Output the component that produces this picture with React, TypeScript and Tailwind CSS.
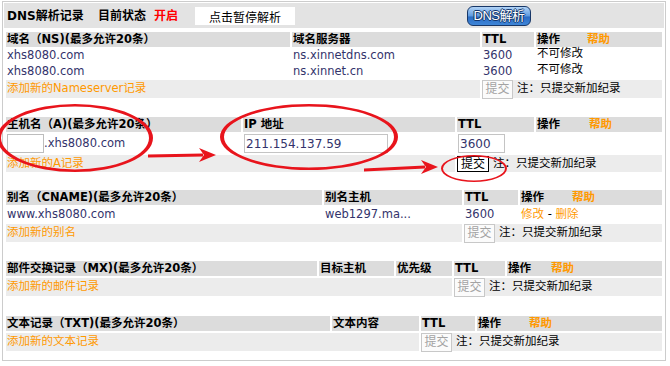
import React from "react";

const font = "font-['DejaVu_Sans','Noto_Sans_CJK_SC',sans-serif]";

const Head = ({ className = "", children }: { className?: string; children?: React.ReactNode }) => (
  <div className={`h-[15px] shrink-0 bg-[#dcdcdc] pl-[1px] font-bold leading-[15px] whitespace-nowrap text-black ${className}`}>
    {children}
  </div>
);

const Cell = ({ className = "", children }: { className?: string; children?: React.ReactNode }) => (
  <div className={`h-[15px] shrink-0 pl-[1px] leading-[15px] whitespace-nowrap text-[#33336b] ${className}`}>
    {children}
  </div>
);

const Help = ({ gap = "ml-[27px]" }: { gap?: string }) => (
  <span className={`${gap} text-[#ff9900]`}>帮助</span>
);

const Submit = ({ active = false }: { active?: boolean }) => (
  <button
    disabled={!active}
    className={
      active
        ? "flex h-[16px] w-[32px] items-center justify-center border border-black bg-white text-[12px] text-black"
        : "flex h-[19px] w-[31px] items-center justify-center border border-[#c8c8c8] bg-[#fbfbfb] text-[12px] text-[#a3a3a3]"
    }
  >
    提交
  </button>
);

const AddRow = ({ left, link, tall = true, active = false }: { left: string; link: string; tall?: boolean; active?: boolean }) => (
  <div className={`flex gap-x-[2px] ${tall ? "h-[18px]" : "h-[17px]"}`}>
    <div className={`${left} flex shrink-0 items-center bg-[#ececec] pl-[1px] text-[#ff9900]`}>{link}</div>
    <div className="flex flex-1 items-center gap-[4px] whitespace-nowrap bg-[#ececec] text-black">
      <Submit active={active} />
      <span>注：只提交新加纪录</span>
    </div>
  </div>
);

function Arrow({ x1, y1, x2, y2 }: { x1: number; y1: number; x2: number; y2: number }) {
  const tip = x2;
  const base = x2 - 17;
  return (
    <g fill="#e8141c" stroke="none">
      <path d={`M${x1} ${y1 - 1.5} L${base + 4} ${y2 - 1.5} L${base + 4} ${y2 + 1.5} L${x1} ${y1 + 1.5} Z`} />
      <path d={`M${tip} ${y2} L${base} ${y2 - 7} L${base + 5} ${y2} L${base} ${y2 + 7} Z`} />
    </g>
  );
}

function Ring({ cx, cy, rx, ry, side, top }: { cx: number; cy: number; rx: number; ry: number; side: number; top: number }) {
  const irx = rx - side;
  const iry = ry - top;
  return (
    <path
      fillRule="evenodd"
      fill="#e8141c"
      d={`M${cx - rx} ${cy} a${rx} ${ry} 0 1 0 ${rx * 2} 0 a${rx} ${ry} 0 1 0 ${-rx * 2} 0 Z M${cx - irx} ${cy} a${irx} ${iry} 0 1 0 ${irx * 2} 0 a${irx} ${iry} 0 1 0 ${-irx * 2} 0 Z`}
    />
  );
}

export default function App() {
  return (
    <div className={`relative h-[366px] w-[670px] overflow-hidden bg-white pl-[2px] pt-[1px] text-[11.5px] ${font}`}>
      <div className="h-[360px] w-[664px] border border-[#cccccc] px-[1px] pt-[1px]">
        {/* top bar */}
        <div className="flex h-[25px] items-center bg-[#e3e3e3] pl-[3px] text-[12px] font-bold text-black">
          <span className="w-[91px] shrink-0">DNS解析记录</span>
          <span className="w-[56px] shrink-0">目前状态</span>
          <span className="w-[41px] shrink-0 text-[#ff0000]">开启</span>
          <div className="flex h-[18px] w-[100px] shrink-0 items-start justify-center bg-white pt-[2px] font-normal">点击暂停解析</div>
          <div className="ml-[172px] flex h-[20px] w-[64px] items-center justify-center rounded-[6px] border border-[#173768] bg-[linear-gradient(#b3d4f7,#5d9ae0_50%,#2b6cc4_55%,#3f86d8)] font-['Liberation_Sans','Noto_Sans_CJK_SC',sans-serif] text-[13px] font-normal tracking-[-0.5px] text-white [text-shadow:-1px_0_#13356a,1px_0_#13356a,0_-1px_#13356a,0_1px_#13356a]">
            DNS解析
          </div>
        </div>

        <div className="mt-[4px] flex flex-col pl-[2px]">
          {/* NS */}
          <div className="flex w-[656px] flex-col gap-y-[1px]">
            <div className="flex gap-x-[2px]">
              <Head className="w-[284px]">域名（NS)(最多允许20条）</Head>
              <Head className="w-[188px]">域名服务器</Head>
              <Head className="w-[52px]">TTL</Head>
              <Head className="flex-1">操作<Help /></Head>
            </div>
            {["ns.xinnetdns.com", "ns.xinnet.cn"].map((ns) => (
              <div key={ns} className="flex gap-x-[2px]">
                <Cell className="w-[284px]">xhs8080.com</Cell>
                <Cell className="w-[188px]">{ns}</Cell>
                <Cell className="w-[52px]">3600</Cell>
                <Cell className="flex-1 text-black">
                  <span className="relative top-[-2px] text-black">不可修改</span>
                </Cell>
              </div>
            ))}
            <AddRow left="w-[474px]" link="添加新的Nameserver记录" />
          </div>

          {/* A */}
          <div className="mt-[19px] flex w-[656px] flex-col gap-y-[1px]">
            <div className="flex gap-x-[2px]">
              <Head className="w-[235px]">主机名（A)(最多允许20条）</Head>
              <Head className="w-[212px]">IP 地址</Head>
              <Head className="w-[77px]">TTL</Head>
              <Head className="flex-1">操作<Help gap="ml-[29px]" /></Head>
            </div>
            <div className="flex h-[21px] items-center gap-x-[2px] text-[#33336b]">
              <div className="flex w-[235px] shrink-0 items-center pl-[1px]">
                <div className="h-[19px] w-[37px] border border-[#bdbdbd] bg-white" />
                <span>.xhs8080.com</span>
              </div>
              <div className="w-[212px] shrink-0 pl-[1px]">
                <div className="flex h-[19px] w-[144px] items-center border border-[#c4c4c4] bg-white pl-[1px] text-[12px]">211.154.137.59</div>
              </div>
              <div className="w-[77px] shrink-0 pl-[1px]">
                <div className="flex h-[19px] w-[47px] items-center border border-[#c4c4c4] bg-white pl-[1px] text-[12px]">3600</div>
              </div>
              <div className="flex-1" />
            </div>
            <AddRow left="w-[449px]" link="添加新的A记录" tall={false} active />
          </div>

          {/* CNAME */}
          <div className="mt-[18px] flex w-[656px] flex-col gap-y-[2px]">
            <div className="flex gap-x-[2px]">
              <Head className="w-[316px]">别名（CNAME)(最多允许20条）</Head>
              <Head className="w-[138px]">别名主机</Head>
              <Head className="w-[54px]">TTL</Head>
              <Head className="flex-1">操作<Help gap="ml-[28px]" /></Head>
            </div>
            <div className="flex gap-x-[2px]">
              <Cell className="w-[316px]">www.xhs8080.com</Cell>
              <Cell className="w-[138px]">web1297.ma...</Cell>
              <Cell className="w-[54px]">3600</Cell>
              <Cell className="flex-1 text-black">
                <span className="text-[#ff9900]">修改</span> - <span className="text-[#ff9900]">删除</span>
              </Cell>
            </div>
            <AddRow left="w-[456px]" link="添加新的别名" />
          </div>

          {/* MX */}
          <div className="mt-[19px] flex w-[656px] flex-col gap-y-[2px]">
            <div className="flex gap-x-[2px]">
              <Head className="w-[311px]">部件交换记录（MX)(最多允许20条）</Head>
              <Head className="w-[75px]">目标主机</Head>
              <Head className="w-[56px]">优先级</Head>
              <Head className="w-[51px]">TTL</Head>
              <Head className="flex-1">操作<Help gap="ml-[20px]" /></Head>
            </div>
            <AddRow left="w-[446px]" link="添加新的邮件记录" />
          </div>

          {/* TXT */}
          <div className="mt-[20px] flex w-[656px] flex-col gap-y-[2px]">
            <div className="flex gap-x-[2px]">
              <Head className="w-[324px]">文本记录（TXT)(最多允许20条）</Head>
              <Head className="w-[87px]">文本内容</Head>
              <Head className="w-[54px]">TTL</Head>
              <Head className="flex-1">操作<Help gap="ml-[28px]" /></Head>
            </div>
            <AddRow left="w-[413px]" link="添加新的文本记录" />
          </div>
        </div>
      </div>

      {/* red annotation marks */}
      <svg className="pointer-events-none absolute left-0 top-0" width="670" height="366" viewBox="0 0 670 366">
        <Ring cx={75} cy={138} rx={78} ry={34} side={4} top={2.5} />
        <Ring cx={309} cy={137} rx={89} ry={33} side={4} top={2.5} />
        <Ring cx={474} cy={168.5} rx={33} ry={13.5} side={2} top={1.5} />
        <Arrow x1={148} y1={156} x2={216} y2={155} />
        <Arrow x1={364} y1={170} x2={438} y2={167} />
      </svg>
    </div>
  );
}
